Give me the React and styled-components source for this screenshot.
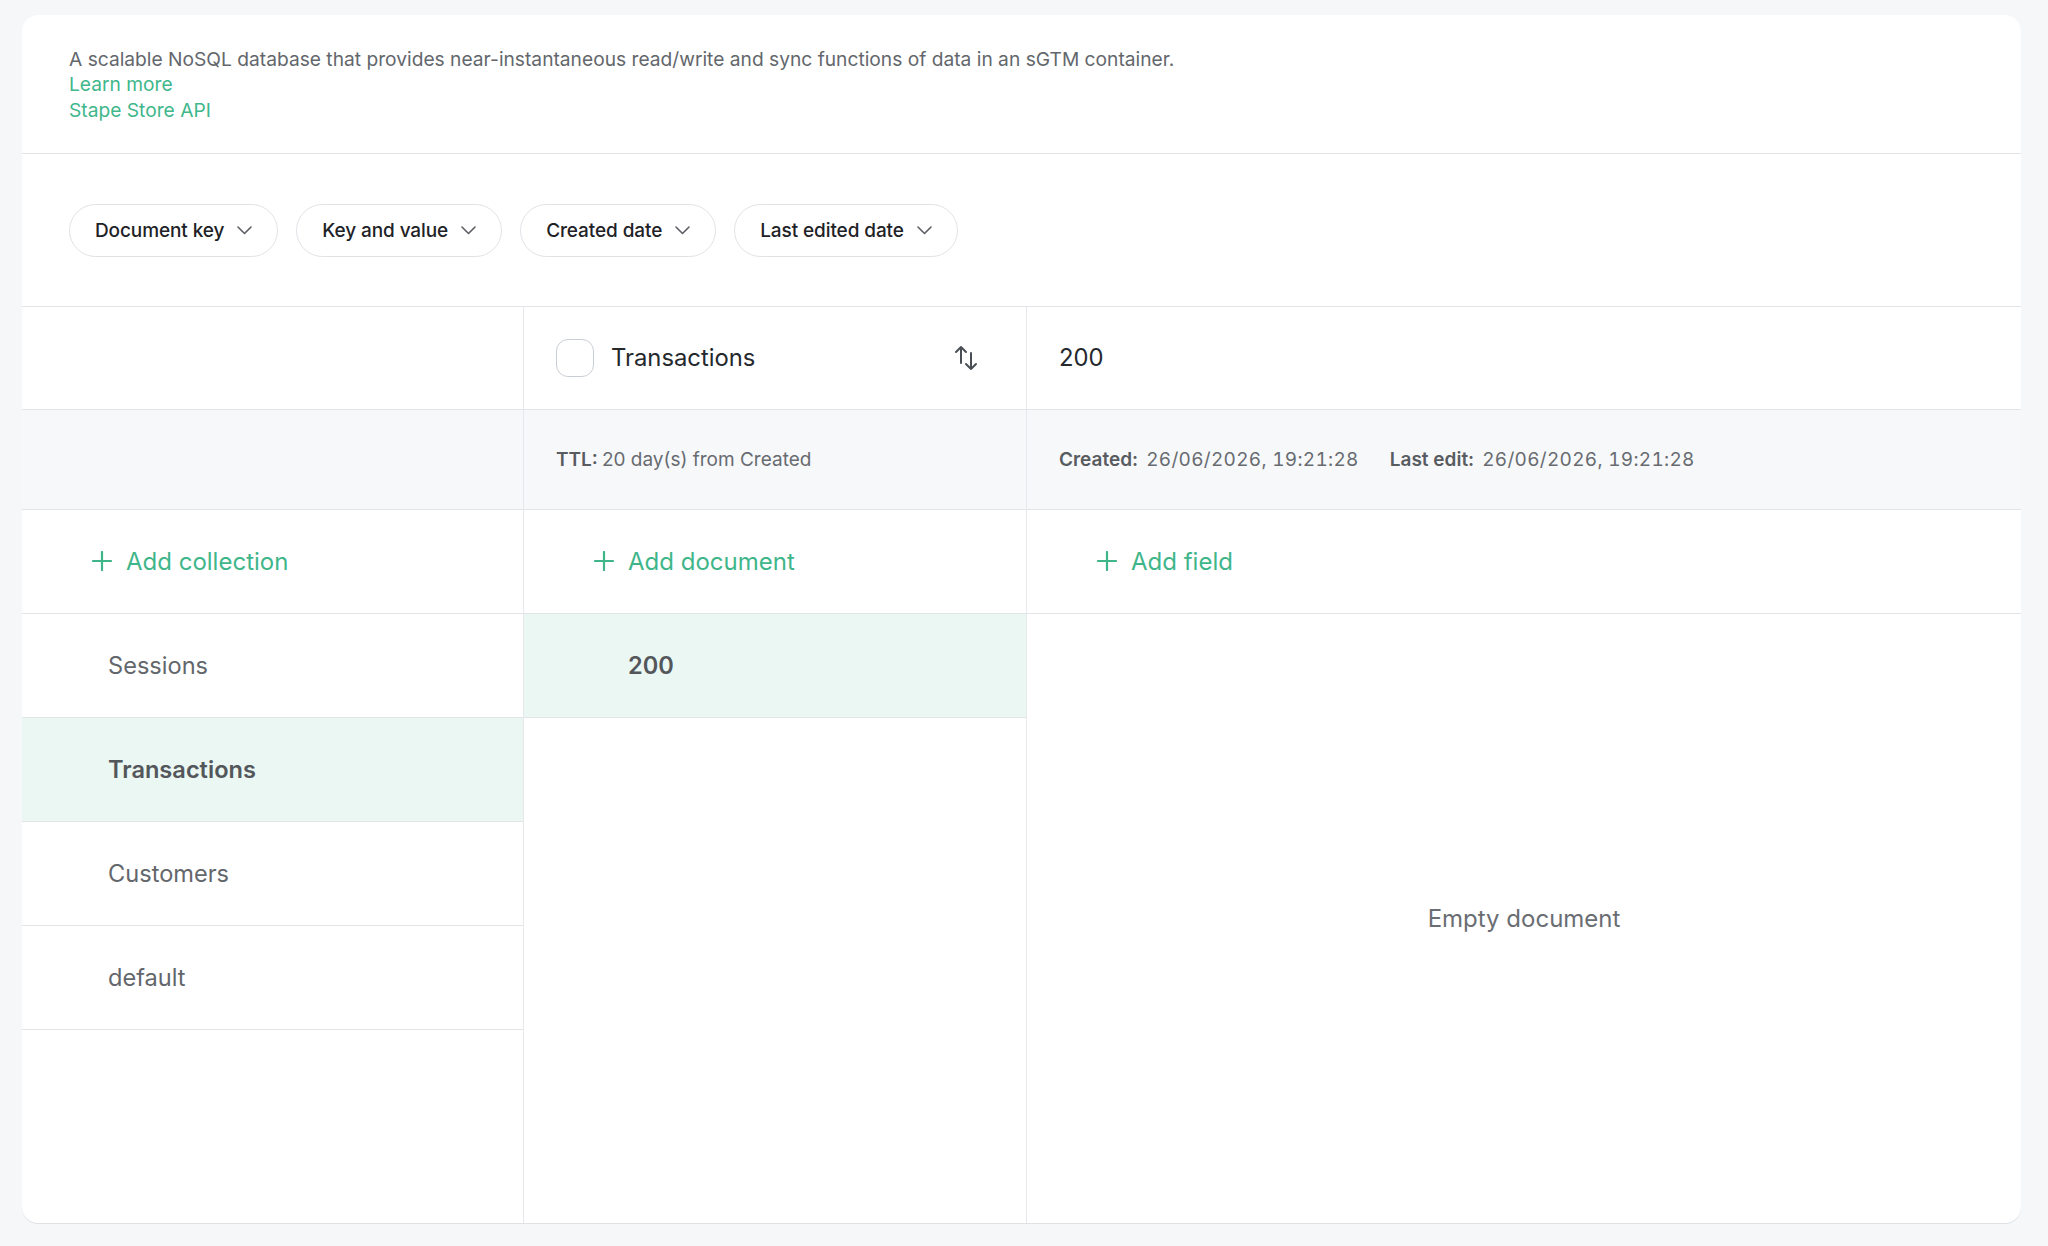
import React from "react";
import styled, { createGlobalStyle } from "styled-components";

const GlobalStyle = createGlobalStyle`
  html, body { margin: 0; padding: 0; background: #f6f7f9; }
  body { font-family: "Inter", "Roboto", "Liberation Sans", sans-serif; -webkit-font-smoothing: antialiased; }
  * { box-sizing: border-box; }
`;

const Page = styled.div`
  padding: 15px 27px 23px 22px;
  min-height: 1246px;
`;

const Card = styled.div`
  background: #ffffff;
  border-radius: 16px;
  height: 1208px;
  overflow: hidden;
  display: flex;
  flex-direction: column;
  box-shadow: 0 1px 0 #dfe1e5;
`;

const Intro = styled.section`
  padding: 32px 47px 30px;
  border-bottom: 1px solid #e2e4e8;
  font-size: 19.2px;
  line-height: 25.3px;
  color: #63676c;
`;

const IntroLink = styled.a`
  display: block;
  color: #40b78b;
  text-decoration: none;
`;

const Filters = styled.section`
  display: flex;
  gap: 18px;
  padding: 50px 47px 49px;
  border-bottom: 1px solid #e2e4e8;
`;

const Chip = styled.button`
  display: flex;
  align-items: center;
  gap: 13px;
  height: 53px;
  padding: 0 25px;
  border: 1.5px solid #e0e2e6;
  border-radius: 999px;
  background: #fff;
  font-family: inherit;
  font-size: 19px;
  font-weight: 500;
  color: #1e2226;
  letter-spacing: -0.1px;
`;

const Grid = styled.div`
  flex: 1;
  display: grid;
  grid-template-columns: 502px 503px 1fr;
  grid-template-rows: 103px 100px 104px 1fr;
`;

const Cell = styled.div`
  display: flex;
  align-items: center;
  padding: 0 32px;
  border-bottom: 1px solid #e2e4e8;
  border-right: ${(p) => (p.$last ? "none" : "1px solid #e6e8eb")};
  background: ${(p) => (p.$muted ? "#f7f8fa" : "#fff")};
`;

const Checkbox = styled.span`
  width: 38px;
  height: 38px;
  border: 1.5px solid #c9ced5;
  border-radius: 12px;
  flex-shrink: 0;
`;

const HeadTitle = styled.span`
  font-size: 23.8px;
  color: #25292d;
  margin-left: 17px;
  flex: 1;
`;

const HeadValue = styled.span`
  font-size: 23.8px;
  color: #25292d;
`;

const SortButton = styled.span`
  display: flex;
  margin-right: 14px;
  color: #4a4f55;
`;

const Meta = styled.span`
  font-size: 19px;
  color: #676b70;
  margin-right: ${(p) => (p.$gap ? "31px" : "0")};
`;

const MetaLabel = styled.b`
  font-weight: 600;
  color: #585c61;
  margin-right: ${(p) => p.$space}px;
`;

const DateValue = styled.span`
  font-variant-numeric: tabular-nums;
  letter-spacing: 0.3px;
`;

const AddButton = styled.button`
  display: flex;
  align-items: center;
  gap: 14px;
  margin-left: 38px;
  padding: 0;
  border: none;
  background: none;
  font-family: inherit;
  font-size: 24px;
  color: #3fb68a;
`;

const Column = styled.div`
  display: flex;
  flex-direction: column;
  border-right: 1px solid #e6e8eb;
`;

const ListItem = styled.div`
  height: 104px;
  flex-shrink: 0;
  display: flex;
  align-items: center;
  padding-left: ${(p) => p.$indent}px;
  border-bottom: 1px solid #e2e4e8;
  background: ${(p) => (p.$active ? "#ebf7f2" : "#fff")};
  font-size: 23.6px;
  font-weight: ${(p) => (p.$active ? 600 : 400)};
  color: ${(p) => (p.$active ? "#53575c" : "#63676c")};
`;

const Empty = styled.div`
  display: flex;
  align-items: center;
  justify-content: center;
  font-size: 24px;
  color: #6a6e73;
`;

const Chevron = () => (
  <svg width="15" height="9" viewBox="0 0 15 9" fill="none">
    <path d="M1 1l6.5 6.5L14 1" stroke="#5b5f64" strokeWidth="1.6" strokeLinecap="round" strokeLinejoin="round" />
  </svg>
);

const SortIcon = () => (
  <svg width="28" height="28" viewBox="0 0 28 28" fill="none" stroke="currentColor" strokeWidth="2" strokeLinecap="round" strokeLinejoin="round">
    <path d="M9 19V3M4 8l5-5 5 5" />
    <path d="M19 9v16M14 20l5 5 5-5" />
  </svg>
);

const Plus = () => (
  <svg width="20" height="20" viewBox="0 0 20 20" fill="none" stroke="#3fb68a" strokeWidth="2.2" strokeLinecap="round">
    <path d="M10 1v18M1 10h18" />
  </svg>
);

const filters = ["Document key", "Key and value", "Created date", "Last edited date"];
const collections = ["Sessions", "Transactions", "Customers", "default"];

export default function App() {
  return (
    <>
      <GlobalStyle />
      <Page>
        <Card>
          <Intro>
            A scalable NoSQL database that provides near-instantaneous read/write and sync functions of data in an sGTM container.
            <IntroLink href="#">Learn more</IntroLink>
            <IntroLink href="#">Stape Store API</IntroLink>
          </Intro>
          <Filters>
            {filters.map((f) => (
              <Chip key={f}>
                {f}
                <Chevron />
              </Chip>
            ))}
          </Filters>
          <Grid>
            <Cell />
            <Cell>
              <Checkbox />
              <HeadTitle>Transactions</HeadTitle>
              <SortButton>
                <SortIcon />
              </SortButton>
            </Cell>
            <Cell $last>
              <HeadValue>200</HeadValue>
            </Cell>

            <Cell $muted />
            <Cell $muted>
              <Meta>
                <MetaLabel $space={4}>TTL:</MetaLabel>20 day(s) from Created
              </Meta>
            </Cell>
            <Cell $muted $last>
              <Meta $gap>
                <MetaLabel $space={8}>Created:</MetaLabel>
                <DateValue>26/06/2026, 19:21:28</DateValue>
              </Meta>
              <Meta>
                <MetaLabel $space={8}>Last edit:</MetaLabel>
                <DateValue>26/06/2026, 19:21:28</DateValue>
              </Meta>
            </Cell>

            <Cell>
              <AddButton>
                <Plus />
                Add collection
              </AddButton>
            </Cell>
            <Cell>
              <AddButton>
                <Plus />
                Add document
              </AddButton>
            </Cell>
            <Cell $last>
              <AddButton>
                <Plus />
                Add field
              </AddButton>
            </Cell>

            <Column>
              {collections.map((c) => (
                <ListItem key={c} $indent={86} $active={c === "Transactions"}>
                  {c}
                </ListItem>
              ))}
            </Column>
            <Column>
              <ListItem $indent={104} $active>
                200
              </ListItem>
            </Column>
            <Empty>Empty document</Empty>
          </Grid>
        </Card>
      </Page>
    </>
  );
}
